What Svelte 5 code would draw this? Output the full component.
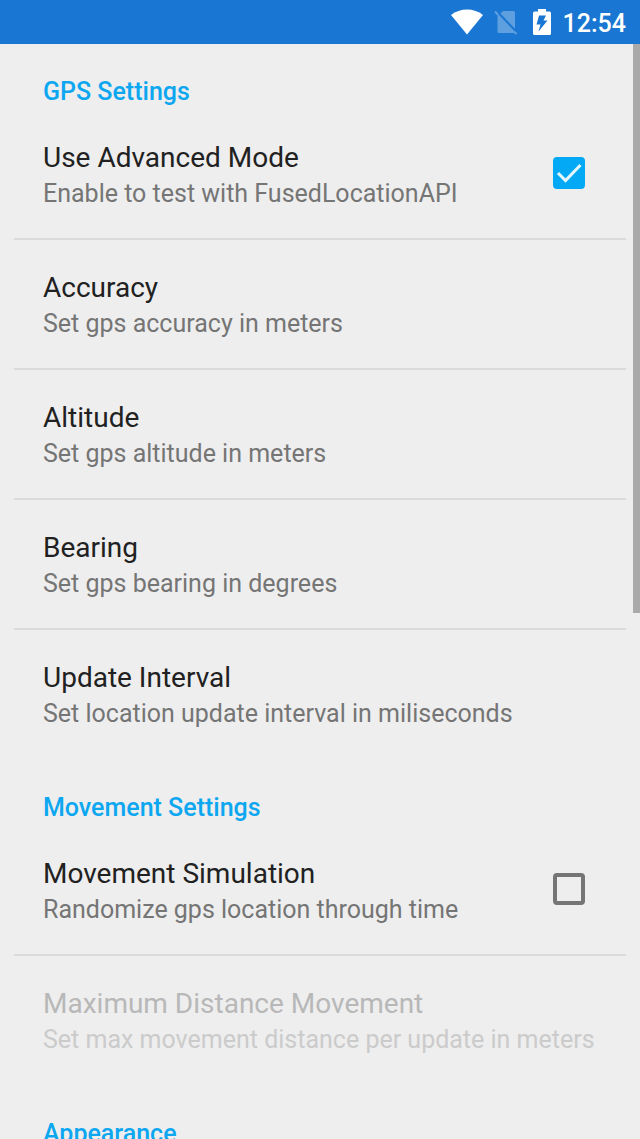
<script lang="ts">
    interface Preference {
        title: string;
        summary: string;
        checkbox?: boolean;
        checked?: boolean;
        disabled?: boolean;
    }

    interface Group {
        name: string;
        items: Preference[];
    }

    let groups: Group[] = $state([
        {
            name: 'GPS Settings',
            items: [
                { title: 'Use Advanced Mode', summary: 'Enable to test with FusedLocationAPI', checkbox: true, checked: true },
                { title: 'Accuracy', summary: 'Set gps accuracy in meters' },
                { title: 'Altitude', summary: 'Set gps altitude in meters' },
                { title: 'Bearing', summary: 'Set gps bearing in degrees' },
                { title: 'Update Interval', summary: 'Set location update interval in miliseconds' }
            ]
        },
        {
            name: 'Movement Settings',
            items: [
                { title: 'Movement Simulation', summary: 'Randomize gps location through time', checkbox: true, checked: false },
                { title: 'Maximum Distance Movement', summary: 'Set max movement distance per update in meters', disabled: true }
            ]
        },
        { name: 'Appearance', items: [] }
    ]);
</script>

{#snippet text(item: Preference)}
    <span class="text">
        <span class="title">{item.title}</span>
        <span class="summary">{item.summary}</span>
    </span>
{/snippet}

<div class="screen">
    <header class="status">
        <svg width="32" height="26" viewBox="0 0 32 26" aria-hidden="true">
            <path d="M0 6C9 -1.4 23 -1.4 32 6L16 25.500Z" fill="#fff" />
        </svg>
        <svg class="sim" width="24" height="26" viewBox="0 0 24 26" aria-hidden="true">
            <path d="M9 2H19.500a1.500 1.500 0 0 1 1.500 1.500V23a1 1 0 0 1-1 1H5a1.500 1.500 0 0 1-1.500-1.500V7Z" fill="#5e9fe0" />
            <path d="M1 2.500L22.500 25" stroke="#5e9fe0" stroke-width="2" />
            <path d="M5 4.500L21.500 21.800" stroke="#1976d2" stroke-width="2" />
        </svg>
        <svg width="18" height="26" viewBox="0 0 18 26" aria-hidden="true">
            <path fill-rule="evenodd" fill="#fff" d="M5 0H13V2.500H16.500Q18 2.500 18 4V24.500Q18 26 16.500 26H1.500Q0 26 0 24.500V4Q0 2.500 1.500 2.500H5ZM6 6.500H13L10.500 11.500H14.500L5.500 22.500L7.500 15.500H3.500Z" />
        </svg>
        <time>12:54</time>
    </header>

    <main>
        {#each groups as group}
            <section>
                <h2>{group.name}</h2>
                <ul>
                    {#each group.items as item}
                        <li>
                            {#if item.checkbox}
                                <label class="row">
                                    {@render text(item)}
                                    <span class="check">
                                        <input type="checkbox" bind:checked={item.checked} />
                                        {#if item.checked}
                                            <svg width="32" height="32" viewBox="0 0 32 32" aria-hidden="true">
                                                <path d="M5 16L12.500 23.500L27.500 8" fill="none" stroke="#e4f7ff" stroke-width="3" />
                                            </svg>
                                        {/if}
                                    </span>
                                </label>
                            {:else}
                                <button class="row" type="button" disabled={item.disabled}>
                                    {@render text(item)}
                                </button>
                            {/if}
                        </li>
                    {/each}
                </ul>
            </section>
        {/each}
        <div class="scrollbar"></div>
    </main>
</div>

<style>
    :global(body) {
        margin: 0;
        background: #eee;
    }

    .screen {
        display: flex;
        flex-direction: column;
        height: 100vh;
        overflow: hidden;
        background: #eee;
        font-family: Roboto, sans-serif;
    }

    .status {
        display: flex;
        flex: none;
        align-items: center;
        justify-content: flex-end;
        height: 44px;
        padding: 0 14px;
        background: #1976d2;
        color: #fff;
    }

    .status time {
        margin-left: 12px;
        padding-top: 4px;
        font-size: 25px;
        font-weight: 500;
        line-height: 40px;
    }

    .sim {
        margin: 0 15px 0 11px;
    }

    main {
        position: relative;
        flex: 1;
        min-height: 0;
        overflow: hidden;
    }

    h2 {
        margin: 0;
        padding: 34px 43px 4px;
        color: #0ca7f0;
        font-size: 25px;
        font-weight: 500;
        line-height: 28px;
    }

    ul {
        margin: 0;
        padding: 0 14px;
        list-style: none;
    }

    li {
        border-bottom: 2px solid #dadada;
    }

    li:last-child {
        border-color: transparent;
    }

    .row {
        display: flex;
        align-items: center;
        justify-content: space-between;
        box-sizing: border-box;
        width: 100%;
        padding: 30px 41px 26px 29px;
        border: 0;
        background: none;
        font: inherit;
        text-align: left;
        cursor: pointer;
    }

    button.row {
        padding-right: 0;
    }

    .text {
        display: flex;
        flex-direction: column;
        line-height: 36px;
        white-space: nowrap;
    }

    .title {
        color: #212121;
        font-size: 28px;
    }

    .summary {
        color: #757575;
        font-size: 25px;
    }

    .row:disabled {
        cursor: default;
    }

    .row:disabled .title {
        color: #b8b8b8;
    }

    .row:disabled .summary {
        color: #cbcbcb;
    }

    .check {
        display: grid;
        margin-bottom: 6px;
    }

    .check input,
    .check svg {
        grid-area: 1 / 1;
    }

    .check svg {
        pointer-events: none;
    }

    .check input {
        appearance: none;
        box-sizing: border-box;
        width: 32px;
        height: 32px;
        margin: 0;
        border: 4px solid #757575;
        border-radius: 4px;
    }

    .check input:checked {
        border-color: #03a9f4;
        background: #03a9f4;
    }

    /* scroll position indicator, drawn over the list */
    .scrollbar {
        position: absolute;
        top: 0;
        right: 0;
        width: 7px;
        height: 52%;
        background: #aaa;
    }
</style>
